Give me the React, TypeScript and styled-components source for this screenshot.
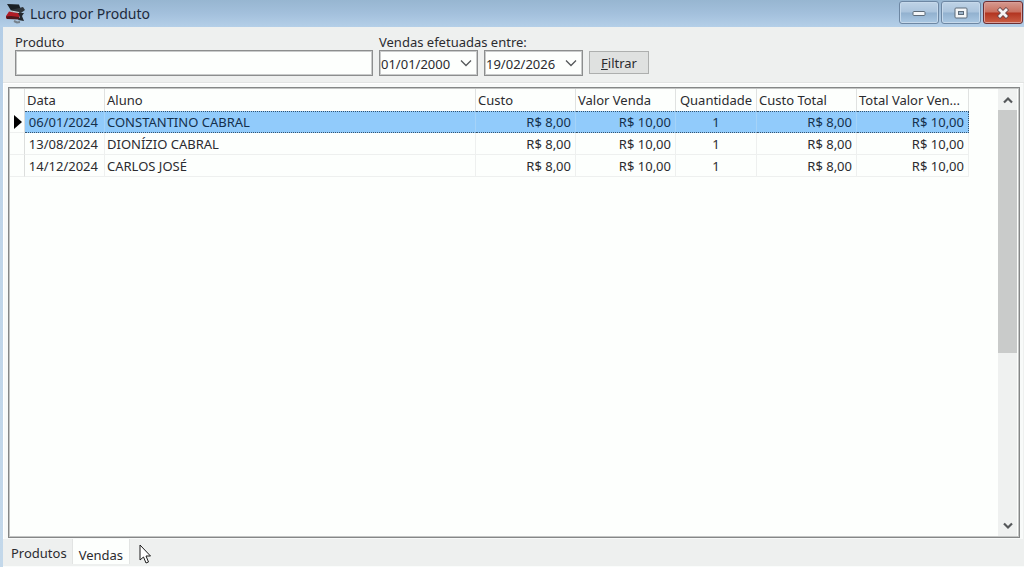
import React, { useState } from 'react';
import styled, { createGlobalStyle, css } from 'styled-components';

const GlobalStyle = createGlobalStyle`
  * { box-sizing: border-box; }
  body {
    margin: 0;
    font-family: "Noto Sans", sans-serif;
    font-size: 13px;
    color: #2b2b2f;
  }
  button, input { font: inherit; color: inherit; }
`;

const Window = styled.div`
  display: flex;
  flex-direction: column;
  min-height: 100vh;
  background: linear-gradient(#9ab8d2, #b3cde6 27px, #bfd5e9 140px, #c3d8ea);
`;

const TitleBar = styled.header`
  display: flex;
  align-items: center;
  gap: 4px;
  height: 27px;
  padding: 0 1px 0 5px;
  background: linear-gradient(#97b6d1, #a3c0dc 50%, #b4cfe8);
`;

const Title = styled.h1`
  flex: 1;
  margin: 0;
  font: 14px "Noto Sans", sans-serif;
  line-height: 24px;
  color: #1d2a3c;
`;

const WindowButtons = styled.div`
  display: flex;
  align-self: flex-start;
  gap: 2px;
  padding-top: 1px;
`;

const WindowButton = styled.button<{ $close?: boolean }>`
  display: flex;
  align-items: center;
  justify-content: center;
  width: 40px;
  height: 23px;
  padding: 0;
  border: 1px solid ${p => (p.$close ? '#6b2f33' : '#6d87a3')};
  border-radius: 3px;
  box-shadow: inset 0 0 0 1px ${p => (p.$close ? '#dc9d96' : '#c6d9eb')};
  background: ${p =>
    p.$close
      ? 'linear-gradient(#d59a90, #c9705f 48%, #b23420 52%, #cb5f45)'
      : 'linear-gradient(#bfd3e6, #abc4dd 48%, #92b1cf 52%, #aac8e3)'};
`;

const Client = styled.main`
  display: flex;
  flex: 1;
  flex-direction: column;
  margin-left: 3px;
  background: #eef0ef;
`;

const Filters = styled.form`
  display: flex;
  align-items: flex-end;
  gap: 6px;
  height: 56px;
  padding: 0 12px 6px;
  border-bottom: 1px solid #e2e4e3;
`;

const Field = styled.div<{ $width: number }>`
  display: flex;
  flex-direction: column;
  width: ${p => p.$width}px;
`;

const Label = styled.label`
  line-height: 16px;
  white-space: nowrap;
`;

const boxBorder = css`
  border: 1px solid #8c8e8e;
  box-shadow: inset 0 0 0 1px #c9cbcb;
  background: #fdfffd;
`;

const TextInput = styled.input`
  ${boxBorder}
  width: 100%;
  height: 26px;
  padding: 0 4px;
`;

const DateGroup = styled.fieldset`
  margin: 0;
  padding: 0;
  border: 0;
  min-width: 0;
`;

const Legend = styled.legend`
  padding: 0;
  line-height: 16px;
`;

const DateRow = styled.div`
  display: flex;
  gap: 6px;
`;

const DateBox = styled.div`
  ${boxBorder}
  display: flex;
  width: 99px;
  height: 26px;
`;

const DateInput = styled.input`
  flex: 1;
  min-width: 0;
  padding: 1px 0 0 1px;
  border: 0;
  background: none;
`;

const DropButton = styled.button`
  display: flex;
  align-items: center;
  justify-content: center;
  width: 22px;
  padding: 0;
  border: 0;
  background: none;
`;

const FilterButton = styled.button`
  width: 60px;
  height: 23px;
  margin: 0 0 2px;
  padding: 0;
  border: 1px solid #adafae;
  background: #dfe1e0;
`;

const Sheet = styled.section`
  display: flex;
  flex: 1;
  margin: 0 1px 0 0;
  padding: 3px 3px 1px 4px;
  border-top: 1px solid #fff;
  border-left: 1px solid #fff;
  background: #f8faf9;
`;

const GridBox = styled.div`
  display: flex;
  flex: 1;
  min-width: 0;
  border: 1px solid #858787;
  box-shadow: inset 0 0 0 1px #c4c6c5;
  padding: 1px;
  background: #fdfffd;
`;

const TableArea = styled.div`
  flex: 1;
  min-width: 0;
  padding-right: 29px;
`;

const Table = styled.table`
  width: 100%;
  table-layout: fixed;
  border-collapse: separate;
  border-spacing: 0;
`;

type Align = 'left' | 'center' | 'right';

const Head = styled.th<{ $align?: Align }>`
  height: 22px;
  padding: 0 2px;
  border-right: 1px solid #e0e2e1;
  font-weight: normal;
  text-align: ${p => p.$align ?? 'left'};
  line-height: 20px;
  white-space: nowrap;
`;

const Cell = styled.td<{ $align?: Align }>`
  height: 22px;
  padding: 1px ${p => (p.$align === 'right' ? 4 : 2)}px 0;
  border-right: 1px solid #eef0ef;
  border-bottom: 1px solid #eef0ef;
  text-align: ${p => p.$align ?? 'left'};
  line-height: 20px;
  white-space: nowrap;
`;

const DateCell = styled(Cell)`
  padding-right: 6px;
  text-align: right;
`;

const Marker = styled(Cell)`
  padding: 0 0 0 3px;
  border-right-color: #dcdedd;
  & > svg { display: block; }
`;

const Row = styled.tr<{ $selected: boolean }>`
  ${p =>
    p.$selected &&
    css`
      & > ${Cell}:not(:first-child) {
        padding-top: 0;
        background: #91cbfb;
        border-top: 1px dotted #34536f;
        border-bottom: 1px dotted #34536f;
        border-right-color: #a5d3f8;
        color: #14304c;
      }
      & > ${Cell}:last-child { border-right: 1px dotted #34536f; }
    `}
`;

const ScrollBar = styled.div`
  display: flex;
  flex-direction: column;
  width: 19px;
  margin-right: 1px;
  background: #eff1f0;
`;

const ScrollButton = styled.button`
  display: flex;
  align-items: center;
  justify-content: center;
  height: 21px;
  padding: 0;
  border: 0;
  background: none;
`;

const Track = styled.div`
  flex: 1;
  display: flex;
  flex-direction: column;
`;

const Thumb = styled.div`
  flex: 3;
  background: #c9cbca;
`;

const TrackRest = styled.div`
  flex: 2;
`;

const Tabs = styled.nav`
  display: flex;
  height: 28px;
  padding-bottom: 2px;
  border-bottom: 1px solid #fafcfb;
`;

const Tab = styled.button<{ $active: boolean }>`
  padding: ${p => (p.$active ? '6px 6px 0' : '2px 5px 0 8px')};
  border: 0;
  border-right: 1px solid #e2e4e3;
  background: ${p => (p.$active ? '#fdfffd' : 'none')};
`;

const Pointer = styled.svg`
  position: absolute;
  left: 139px;
  top: 544px;
  pointer-events: none;
`;

const Chevron = ({ up, bold }: { up?: boolean; bold?: boolean }) => (
  <svg width="12" height="8" viewBox="0 0 12 8" fill="none" stroke="#55585a" strokeWidth={bold ? 2.2 : 1.3}>
    <path d={bold ? (up ? 'M2 6.5 6 2.5 10 6.5' : 'M2 1.5 6 5.5 10 1.5') : 'M1 1.5 6 6.5 11 1.5'} />
  </svg>
);

const AppIcon = () => (
  <svg width="21" height="24" viewBox="0 0 21 24">
    <path d="M2 2 14 2.500 16 8 6 8.500Z" fill="#1b2024" />
    <path d="M6 8 18 5 20 8 16 11 7 10Z" fill="#30363b" />
    <path d="M4 9.500 9 10.500 14 11 15 14 13 17 1 16.500 1 14Z" fill="#b01c26" />
    <path d="M1 14.500 6 14 14 15 15 17.500 2 17Z" fill="#4d171c" />
    <path d="M13 11 19 11 17 14 19 19 13 18 15 15Z" fill="#24292e" />
    <path d="M9 19 12 20.500 15 20" stroke="#76818b" strokeWidth="2" fill="none" />
    <path d="M6 9 14 10.500" stroke="#d7dce1" strokeWidth="1" />
  </svg>
);

const sales = [
  { date: '06/01/2024', student: 'CONSTANTINO CABRAL' },
  { date: '13/08/2024', student: 'DIONÍZIO CABRAL' },
  { date: '14/12/2024', student: 'CARLOS JOSÉ' },
];

const columns = ['Data', 'Aluno', 'Custo', 'Valor Venda', 'Quantidade', 'Custo Total', 'Total Valor Ven...'];
const widths = [15, 80, undefined, 100, 100, 81, 100, 112];

const DateField = ({ label, initial }: { label: string; initial: string }) => {
  const [value, setValue] = useState(initial);
  return (
    <DateBox>
      <DateInput aria-label={label} value={value} onChange={e => setValue(e.target.value)} />
      <DropButton type="button" aria-label="Abrir calendário">
        <Chevron />
      </DropButton>
    </DateBox>
  );
};

export default function App() {
  const [selected, setSelected] = useState(0);
  const [tab, setTab] = useState('Vendas');
  return (
    <Window>
      <GlobalStyle />
      <TitleBar>
        <AppIcon />
        <Title>Lucro por Produto</Title>
        <WindowButtons>
          <WindowButton aria-label="Minimizar">
            <svg width="14" height="12">
              <rect x="1" y="4.500" width="12" height="4" rx="1" fill="#f4f6f8" stroke="#5d6b79" />
            </svg>
          </WindowButton>
          <WindowButton aria-label="Maximizar">
            <svg width="14" height="12">
              <rect x="1" y="1" width="12" height="10" rx="1" fill="#f4f6f8" stroke="#5d6b79" />
              <rect x="4.500" y="4.500" width="5" height="3" fill="#9db4ca" stroke="#5d6b79" />
            </svg>
          </WindowButton>
          <WindowButton $close aria-label="Fechar">
            <svg width="14" height="12" fill="none">
              <path d="M2.500 1.500 11.500 10.500M11.500 1.500 2.500 10.500" stroke="#69484c" strokeWidth="4.500" />
              <path d="M3 2 11 10M11 2 3 10" stroke="#f5f3f4" strokeWidth="2.800" />
            </svg>
          </WindowButton>
        </WindowButtons>
      </TitleBar>
      <Client>
        <Filters onSubmit={e => e.preventDefault()}>
          <Field $width={358}>
            <Label htmlFor="produto">Produto</Label>
            <TextInput id="produto" />
          </Field>
          <DateGroup>
            <Legend>Vendas efetuadas entre:</Legend>
            <DateRow>
              <DateField label="Data inicial" initial="01/01/2000" />
              <DateField label="Data final" initial="19/02/2026" />
            </DateRow>
          </DateGroup>
          <FilterButton type="submit">
            <u>F</u>iltrar
          </FilterButton>
        </Filters>
        <Sheet>
          <GridBox>
            <TableArea>
              <Table>
                <colgroup>
                  {widths.map((w, i) => (
                    <col key={i} width={w} />
                  ))}
                </colgroup>
                <thead>
                  <tr>
                    <Head />
                    {columns.map(c => (
                      <Head key={c} $align={c === 'Quantidade' ? 'center' : 'left'}>
                        {c}
                      </Head>
                    ))}
                  </tr>
                </thead>
                <tbody>
                  {sales.map((s, i) => (
                    <Row key={s.date} $selected={i === selected} onClick={() => setSelected(i)}>
                      <Marker>
                        {i === selected && (
                          <svg width="9" height="14">
                            <path d="M1 0 9 7 1 14Z" fill="#000" />
                          </svg>
                        )}
                      </Marker>
                      <DateCell>{s.date}</DateCell>
                      <Cell>{s.student}</Cell>
                      <Cell $align="right">R$ 8,00</Cell>
                      <Cell $align="right">R$ 10,00</Cell>
                      <Cell $align="center">1</Cell>
                      <Cell $align="right">R$ 8,00</Cell>
                      <Cell $align="right">R$ 10,00</Cell>
                    </Row>
                  ))}
                </tbody>
              </Table>
            </TableArea>
            <ScrollBar>
              <ScrollButton aria-label="Rolar para cima">
                <Chevron up bold />
              </ScrollButton>
              <Track>
                <Thumb />
                <TrackRest />
              </Track>
              <ScrollButton aria-label="Rolar para baixo">
                <Chevron bold />
              </ScrollButton>
            </ScrollBar>
          </GridBox>
        </Sheet>
        <Tabs>
          {['Produtos', 'Vendas'].map(t => (
            <Tab key={t} $active={t === tab} onClick={() => setTab(t)}>
              {t}
            </Tab>
          ))}
        </Tabs>
      </Client>
      <Pointer width="13" height="21" viewBox="0 0 13 21">
        <path d="M1 1V16L4.500 13 7 19 9.500 18 7 12H11.500Z" fill="#fff" stroke="#1c1c1c" />
      </Pointer>
    </Window>
  );
}
